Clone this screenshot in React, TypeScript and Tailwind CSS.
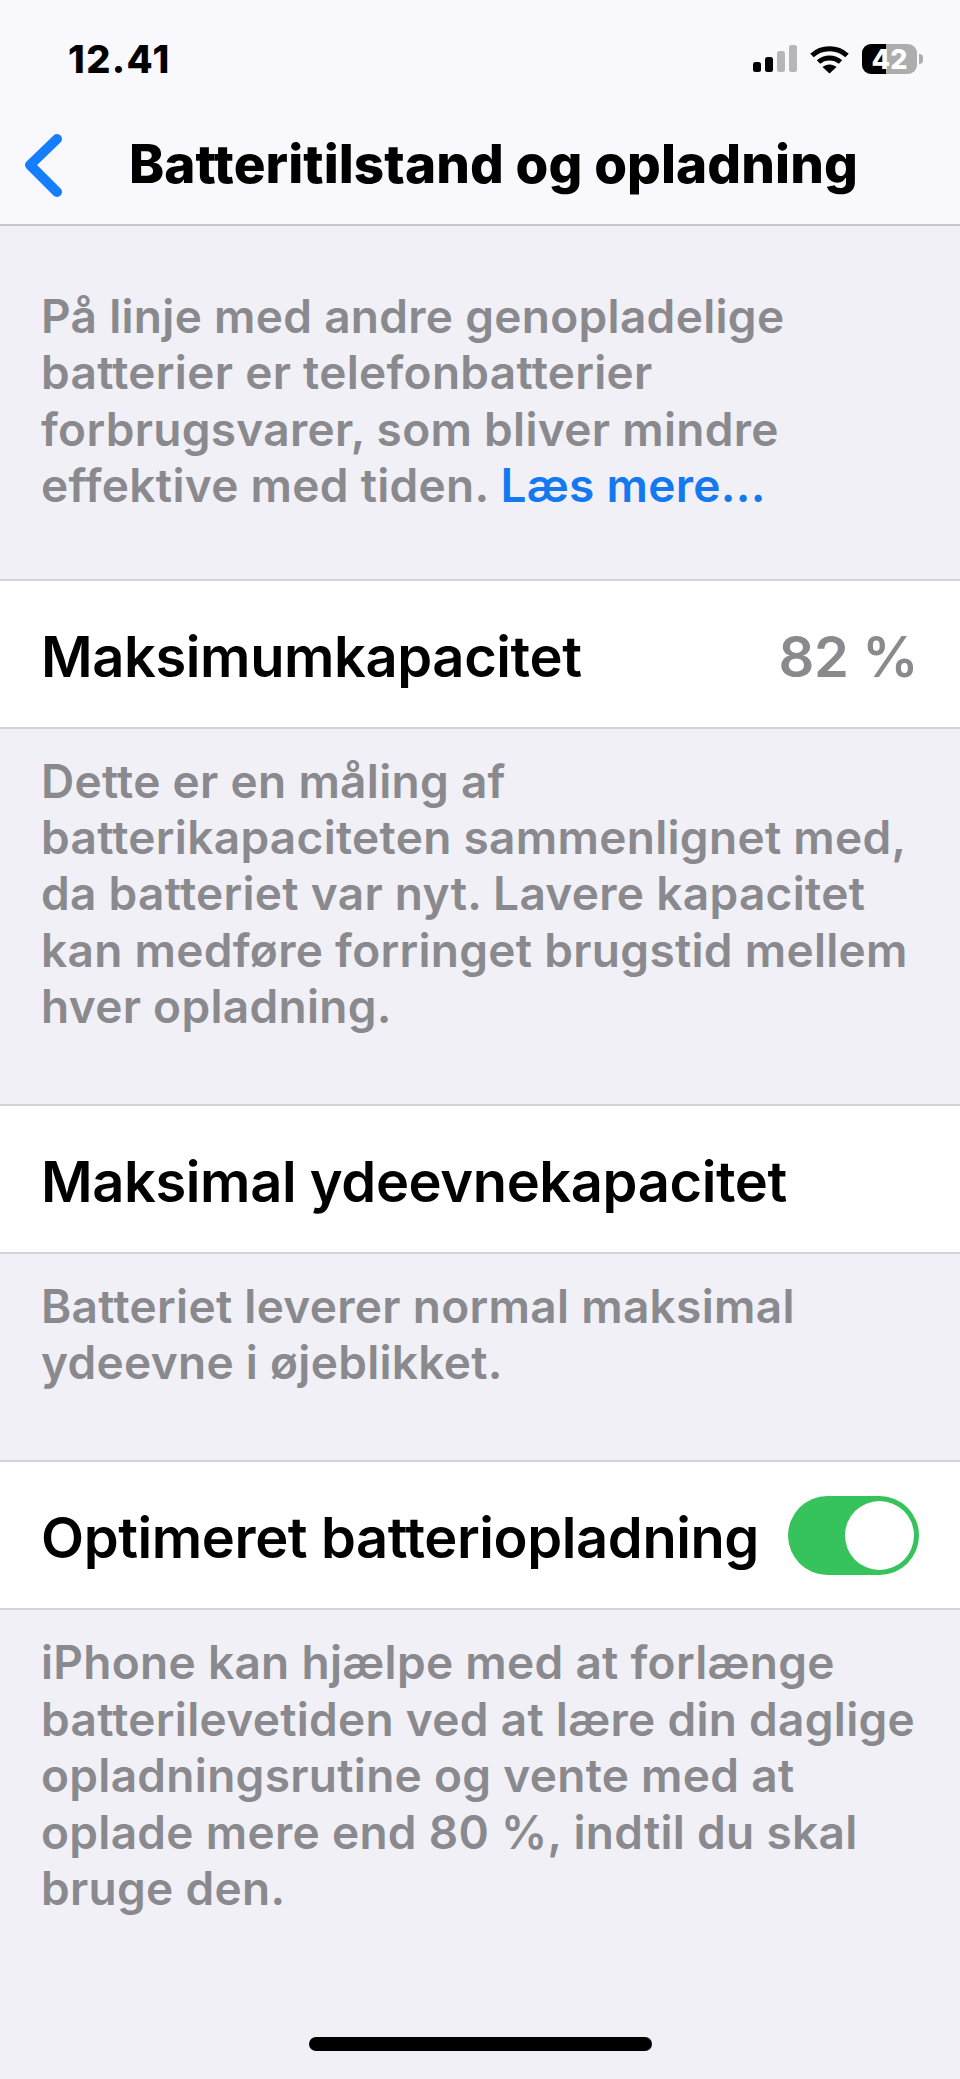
export default function App() {
  const Foot = ({ children, cls }: { children: React.ReactNode; cls: string }) => (
    <div className={"pl-[41px] pr-[42px] text-[46px] leading-[56.4px] font-semibold text-[#8a8a8e] tracking-[0.3px] whitespace-nowrap " + cls}>{children}</div>
  );
  const Label = ({ children, cls = "" }: { children: React.ReactNode; cls?: string }) => (
    <span className={"pt-[6px] " + cls}>{children}</span>
  );
  const Row = ({ children }: { children: React.ReactNode }) => (
    <div className="h-[150px] shrink-0 bg-white border-y-2 border-[#d4d4d8] flex items-center justify-between pl-[41px] pr-[42px] text-[56px] font-semibold text-black tracking-[-0.4px] whitespace-nowrap">{children}</div>
  );
  return (
    <div className="w-[960px] h-[2079px] bg-[#f0f0f6] overflow-hidden relative flex flex-col" style={{ fontFamily: "Inter, 'Liberation Sans', sans-serif" }}>
      <div className="h-[226px] shrink-0 bg-[#f9f9fd] border-b-2 border-[#c8c8cb] flex flex-col">
        <div className="h-[118px] flex items-center justify-between pl-[68px] pr-[37px]">
          <span className="text-[38px] font-extrabold text-black tracking-[1.4px]">12.41</span>
          <div className="flex items-center gap-[13px]">
            <svg width="44" height="28" viewBox="0 0 44 28">
              <rect x="0" y="17" width="8" height="10" rx="2.5" fill="#000" />
              <rect x="12" y="12" width="8" height="15" rx="2.5" fill="#000" />
              <rect x="24" y="6" width="8" height="21" rx="2.5" fill="#b6b6b6" />
              <rect x="36" y="0" width="8" height="27" rx="2.5" fill="#b6b6b6" />
            </svg>
            <svg width="39" height="29" viewBox="0 0 39 29">
              <path d="M2 10.5C11.5 1.5 27.5 1.5 37 10.5" fill="none" stroke="#000" strokeWidth="5" />
              <path d="M8.5 17C14.5 11.5 24.5 11.5 30.5 17" fill="none" stroke="#000" strokeWidth="5" />
              <path d="M19.5 28.5L12.5 22C16.5 18.5 22.5 18.5 26.5 22Z" fill="#000" />
            </svg>
            <div className="flex items-center">
              <div className="relative w-[55px] h-[30px] rounded-[9px] overflow-hidden bg-[#adadad] flex items-center justify-center">
                <div className="absolute left-0 top-0 bottom-0 w-[24px] bg-black" />
                <span className="relative text-[27px] font-extrabold text-white leading-none">42</span>
              </div>
              <div className="w-[4px] h-[10px] ml-[2px] rounded-r-full bg-[#adadad]" />
            </div>
          </div>
        </div>
        <div className="relative flex-1 flex items-center pl-[129px] pb-[12px]">
          <svg className="absolute left-[22px] top-[14px]" width="44" height="68" viewBox="0 0 44 68">
            <path d="M35 7L8 33L35 60" fill="none" stroke="#147eff" strokeWidth="10" strokeLinecap="round" strokeLinejoin="round" />
          </svg>
          <span className="text-[53px] font-extrabold text-black tracking-[0.1px] whitespace-nowrap">Batteritilstand og opladning</span>
        </div>
      </div>
      <Foot cls="pt-[62px] pb-[65px]">
        På linje med andre genopladelige<br />batterier er telefonbatterier<br />forbrugsvarer, som bliver mindre<br />effektive med tiden. <span className="text-[#1478f0]">Læs mere...</span>
      </Foot>
      <Row>
        <Label>Maksimumkapacitet</Label>
        <Label cls="text-[#8a8a8e]">82 %</Label>
      </Row>
      <Foot cls="pt-[24px] pb-[69px]">
        Dette er en måling af<br />batterikapaciteten sammenlignet med,<br />da batteriet var nyt. Lavere kapacitet<br />kan medføre forringet brugstid mellem<br />hver opladning.
      </Foot>
      <Row><Label>Maksimal ydeevnekapacitet</Label></Row>
      <Foot cls="pt-[24px] pb-[70px]">
        Batteriet leverer normal maksimal<br />ydeevne i øjeblikket.
      </Foot>
      <Row>
        <Label>Optimeret batteriopladning</Label>
        <div className="w-[131px] h-[79px] rounded-full bg-[#37c35b] flex items-center justify-end pr-[5px] mr-[-1px]">
          <div className="w-[69px] h-[69px] rounded-full bg-white" />
        </div>
      </Row>
      <Foot cls="pt-[24px]">
        iPhone kan hjælpe med at forlænge<br />batterilevetiden ved at lære din daglige<br />opladningsrutine og vente med at<br />oplade mere end 80 %, indtil du skal<br />bruge den.
      </Foot>
      <div className="absolute left-[309px] top-[2037px] w-[343px] h-[14px] rounded-full bg-black" />
    </div>
  );
}
